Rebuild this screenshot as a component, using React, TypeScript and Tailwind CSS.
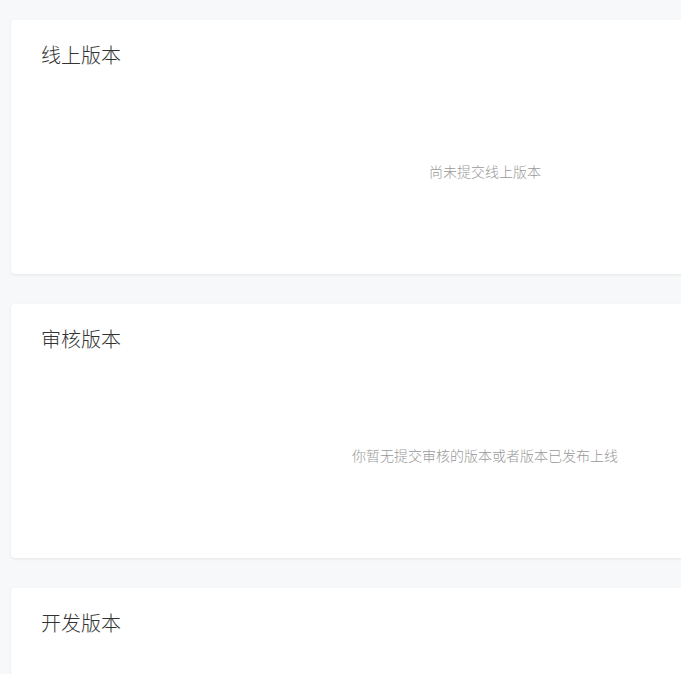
import React from "react";

const font = { fontFamily: '"Noto Sans CJK SC", "Noto Sans", sans-serif' };

function Card({ title, empty }: { title: string; empty: string }) {
  return (
    <div className="w-[948px] shrink-0 h-[254px] bg-white rounded-[4px] shadow-[0_1px_3px_rgba(0,0,0,0.08)] flex flex-col">
      <div className="pl-[30px] pt-[21px] text-[20px] leading-[28px] font-light text-[#333333]">{title}</div>
      <div className="flex-1 flex items-center justify-center text-[14px] leading-[20px] font-light text-[#999999] pb-[1px]">
        {empty}
      </div>
    </div>
  );
}

export default function App() {
  return (
    <div className="w-[681px] h-[674px] overflow-hidden bg-[#f7f8fa]" style={font}>
      <div className="flex flex-col gap-[30px] pl-[11px] pt-[20px]">
        <Card title="线上版本" empty="尚未提交线上版本" />
        <Card title="审核版本" empty="你暂无提交审核的版本或者版本已发布上线" />
        <Card title="开发版本" empty="" />
      </div>
    </div>
  );
}
